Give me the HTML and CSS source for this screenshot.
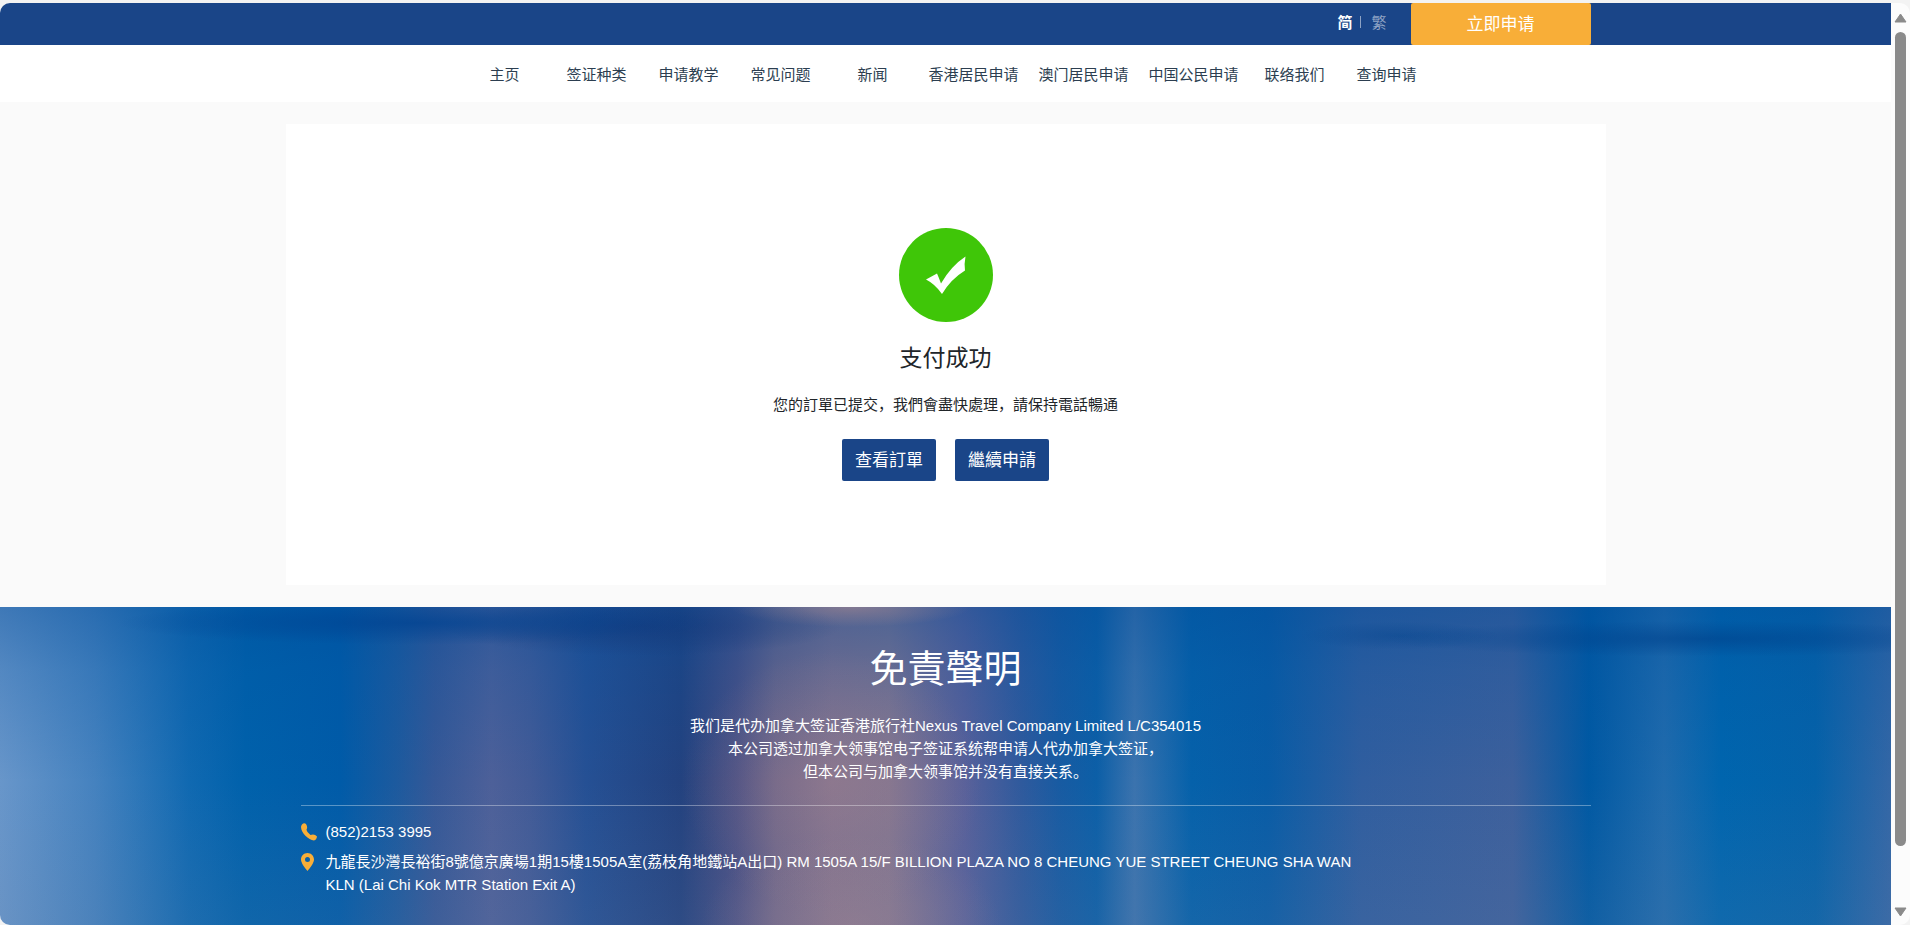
FILE: index.html
```html
<!DOCTYPE html>
<html lang="zh-Hans">
<head>
    <meta charset="UTF-8">
    <meta name="viewport" content="width=device-width, initial-scale=1.0">
    <title>支付成功</title>
    <link rel="stylesheet" href="styles.css">
</head>
<body>
    <div class="window">
        <div class="page">
            <!-- Top bar -->
            <header class="topbar">
                <div class="container topbar-inner">
                    <div class="lang">
                        <a href="#" class="active">简</a>
                        <span class="divider"></span>
                        <a href="#">繁</a>
                    </div>
                    <button type="button" class="apply-btn">立即申请</button>
                </div>
            </header>

            <!-- Navigation -->
            <nav class="nav">
                <a href="#">主页</a>
                <a href="#">签证种类</a>
                <a href="#">申请教学</a>
                <a href="#">常见问题</a>
                <a href="#">新闻</a>
                <a href="#">香港居民申请</a>
                <a href="#">澳门居民申请</a>
                <a href="#">中国公民申请</a>
                <a href="#">联络我们</a>
                <a href="#">查询申请</a>
            </nav>

            <!-- Payment result -->
            <main class="main">
                <section class="card">
                    <svg class="success-icon" viewBox="0 0 94 94" aria-hidden="true">
                        <circle cx="47" cy="47" r="47" fill="#3fc608"/>
                        <path d="M27 51.500L38 45.500Q40 50 42 55.500Q52 38 66.500 28.500Q65 36 66 42.500Q52 51 43 66Q36 56 27 51.500Z" fill="#fff"/>
                    </svg>
                    <h1>支付成功</h1>
                    <p>您的訂單已提交，我們會盡快處理，請保持電話暢通</p>
                    <div class="button-group">
                        <button type="button">查看訂單</button>
                        <button type="button">繼續申請</button>
                    </div>
                </section>
            </main>

            <!-- Footer -->
            <footer class="footer">
                <div class="container">
                    <h2>免責聲明</h2>
                    <p class="disclaimer">
                        我们是代办加拿大签证香港旅行社Nexus Travel Company Limited L/C354015<br>
                        本公司透过加拿大领事馆电子签证系统帮申请人代办加拿大签证，<br>
                        但本公司与加拿大领事馆并没有直接关系。
                    </p>
                    <hr>
                    <ul class="contact">
                        <li>
                            <svg viewBox="0 0 16 18" aria-hidden="true">
                                <path d="M1 1.500Q3-.5 5 1Q7 4 5.500 6.500Q5.500 8.500 9.500 12Q13.500 10.500 16 13.500Q15.500 17 13 17.500C7.500 17 0 10 0 4Q0 2.500 1 1.500Z" fill="#f8ae38"/>
                            </svg>
                            <span>(852)2153 3995</span>
                        </li>
                        <li>
                            <svg viewBox="0 0 16 18" aria-hidden="true">
                                <path fill-rule="evenodd" d="M6.500 0C10.100 0 13 2.900 13 6.500C13 10 9 15 6.500 18C4 15 0 10 0 6.500C0 2.900 2.900 0 6.500 0ZM6.500 4A2.500 2.500 0 1 0 6.500 9A2.500 2.500 0 1 0 6.500 4Z" fill="#f8ae38"/>
                            </svg>
                            <span>九龍長沙灣長裕街8號億京廣場1期15樓1505A室(荔枝角地鐵站A出口) RM 1505A 15/F BILLION PLAZA NO 8 CHEUNG YUE STREET CHEUNG SHA WAN KLN (Lai Chi Kok MTR Station Exit A)</span>
                        </li>
                    </ul>
                </div>
            </footer>
        </div>

        <div class="scrollbar" aria-hidden="true">
            <svg viewBox="0 0 13 10"><path d="M6.500 1L12 9H1Z"/></svg>
            <div class="track"><div class="thumb"></div></div>
            <svg viewBox="0 0 13 10"><path d="M1 1H12L6.500 9Z"/></svg>
        </div>
    </div>
</body>
</html>
```

FILE: styles.css
```css
* {
    box-sizing: border-box;
}
body {
    margin: 0;
    padding-top: 3px;
    height: 100vh;
    overflow: hidden;
    background-color: #f3f3f3;
    font-family: "Liberation Sans", "Noto Sans CJK SC", sans-serif;
    font-size: 15px;
    line-height: 23px;
    color: #212529;
}
a {
    text-decoration: none;
}
button {
    border: none;
    border-radius: 2px;
    height: 42px;
    padding: 0 13px;
    font-family: inherit;
    font-size: 17px;
    color: #fff;
    cursor: pointer;
}
.window {
    display: flex;
    height: 100%;
    border-radius: 10px;
    overflow: hidden;
    background-color: #fcfcfc;
}
.page {
    flex: 1;
    display: flex;
    flex-direction: column;
    min-width: 0;
}
.container {
    width: 100%;
    max-width: 1320px;
    margin: 0 auto;
    padding: 0 15px;
}

/* top bar */
.topbar {
    background-color: #1a4588;
}
.topbar-inner {
    display: flex;
    justify-content: flex-end;
    gap: 24px;
}
.lang {
    display: flex;
    align-items: center;
    gap: 8px;
    padding-bottom: 4px;
}
.lang a {
    color: #8da2c4;
}
.lang .active {
    color: #fff;
    font-weight: bold;
}
.lang .divider {
    width: 1px;
    height: 12px;
    margin-right: 2px;
    background-color: #8da2c4;
}
.apply-btn {
    width: 180px;
    padding-bottom: 4px;
    background-color: #f8ae38;
}

/* navigation */
.nav {
    display: flex;
    justify-content: center;
    padding: 18px 0 16px;
    background-color: #fff;
}
.nav a {
    min-width: 92px;
    padding: 0 10px;
    text-align: center;
    color: #2c3e50;
}

/* payment result */
.main {
    padding: 22px 0;
    background-color: #fafafa;
}
.card {
    display: flex;
    flex-direction: column;
    align-items: center;
    max-width: 1320px;
    margin: 0 auto;
    padding: 104px 15px;
    background-color: #fff;
}
.success-icon {
    width: 94px;
    height: 94px;
}
.card h1 {
    margin: 21px 0 20px;
    font-size: 23px;
    font-weight: normal;
    line-height: 30px;
}
.card p {
    margin: 0 0 23px;
}
.button-group {
    display: flex;
    gap: 19px;
}
.button-group button {
    padding-bottom: 4px;
    background-color: #1a4588;
}

/* footer */
.footer {
    flex: 1;
    padding-top: 38px;
    color: #fff;
    background-image:
        radial-gradient(ellipse 300px 22px at 22% 5%, rgba(0, 66, 145, 0.7), transparent),
        radial-gradient(ellipse 200px 30px at 34% 6%, rgba(20, 55, 120, 0.6), transparent),
        radial-gradient(ellipse 320px 18px at 90% 10%, rgba(0, 66, 140, 0.6), transparent),
        radial-gradient(ellipse 100px 14px at 74% 9%, rgba(0, 66, 140, 0.4), transparent),
        radial-gradient(ellipse 150px 130px at 44% 55%, rgba(165, 135, 145, 0.35), transparent),
        radial-gradient(ellipse 150px 90px at 45% 100%, rgba(165, 135, 145, 0.4), transparent),
        radial-gradient(ellipse 120px 20px at 45% 0%, rgba(165, 135, 145, 0.6), transparent),
        linear-gradient(to bottom, rgba(0, 76, 155, 0.4), rgba(0, 80, 160, 0.2) 20%, transparent 55%, rgba(110, 130, 165, 0.15)),
        linear-gradient(to right,
            #6896ca 0%, #4582bf 5%, #1069b1 10%, #0061ab 13%, #005ba8 18%,
            #1d5a9e 21%, #355897 23%, #4d6099 26%, #425b97 28%, #255094 31%, #23427f 36%,
            #4b5084 39%, #6d6488 41%, #80708d 44%, #80738f 47%, #58609a 51%, #2f5a9d 54%, #185ba2 56%,
            #0c5fa7 58%, #3b73ae 60%, #0561aa 63%, #085ca6 67%,
            #305e9f 72%, #3d609c 80%, #0059a3 84%, #206bad 88%,
            #0065ae 91%, #0562a9 96%, #3467a6 100%);
}
.footer h2 {
    margin: 0 0 21px;
    font-size: 38px;
    font-weight: normal;
    line-height: 48px;
    text-align: center;
}
.disclaimer {
    margin: 0;
    text-align: center;
}
hr {
    height: 1px;
    margin: 22px 0 14px;
    border: none;
    background-color: rgba(255, 255, 255, 0.35);
}
.contact {
    max-width: 1060px;
    margin: 0;
    padding: 0;
    list-style: none;
}
.contact li {
    display: flex;
    gap: 9px;
    margin-bottom: 7px;
}
.contact svg {
    flex: none;
    width: 16px;
    height: 18px;
    margin-top: 3px;
}

/* scrollbar */
.scrollbar {
    display: flex;
    flex-direction: column;
    align-items: center;
    gap: 9px;
    width: 19px;
    padding: 10px 0 8px;
}
.scrollbar svg {
    width: 13px;
    height: 10px;
    fill: #8a8a8a;
    stroke: #8a8a8a;
    stroke-width: 1px;
    stroke-linejoin: round;
}
.track {
    flex: 1;
}
.thumb {
    width: 11px;
    height: 94%;
    border-radius: 6px;
    background-color: #8a8a8a;
}
```
